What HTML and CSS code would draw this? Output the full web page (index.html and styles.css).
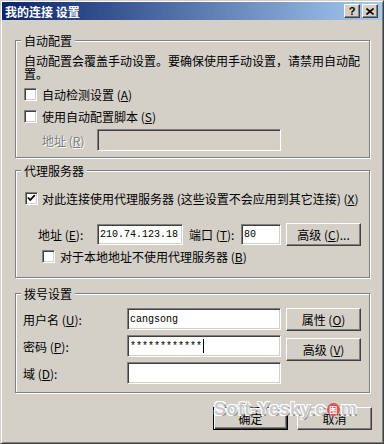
FILE: index.html
```html
<!DOCTYPE html>
<html lang="zh-CN">
<head>
<meta charset="utf-8">
<title>我的连接 设置</title>
<link rel="stylesheet" href="styles.css">
</head>
<body>
<div class="window">
  <div class="titlebar">
    <span class="title">我的连接 设置</span>
    <div class="caption-btns">
      <span class="cbtn help">?</span>
      <span class="cbtn close"><svg width="8" height="7" viewBox="0 0 8 7"><path d="M0.5 0.5 L7.5 6.5 M7.5 0.5 L0.5 6.5" stroke="#000" stroke-width="1.6" fill="none"/></svg></span>
    </div>
  </div>
  <div class="content">
    <fieldset class="group g-auto">
      <legend>自动配置</legend>
      <p class="desc">自动配置会覆盖手动设置。要确保使用手动设置，请禁用自动配置。</p>
      <label class="check c-detect"><span class="box"></span><span>自动检测设置 (<u>A</u>)</span></label>
      <label class="check c-script"><span class="box"></span><span>使用自动配置脚本 (<u>S</u>)</span></label>
      <div class="row script-addr"><span class="lbl disabled">地址 (<u>R</u>)</span><span class="field off w-script"></span></div>
    </fieldset>

    <fieldset class="group g-proxy">
      <legend>代理服务器</legend>
      <label class="check c-proxy"><span class="box"><svg width="11" height="11" viewBox="0 0 11 11"><path d="M2 4.5 L4.2 7 L8.8 2.2" stroke="#000" stroke-width="1.8" fill="none"/></svg></span><span>对此连接使用代理服务器 (这些设置不会应用到其它连接) (<u>X</u>)</span></label>
      <div class="row proxy-addr">
        <span class="lbl l-addr">地址 (<u>E</u>):</span>
        <span class="field w-ip mono">210.74.123.18</span>
        <span class="lbl l-port">端口 (<u>T</u>):</span>
        <span class="field w-port mono">80</span>
        <span class="btn b-adv">高级 (<u>C</u>)...</span>
      </div>
      <label class="check c-local"><span class="box"></span><span>对于本地地址不使用代理服务器 (<u>B</u>)</span></label>
    </fieldset>

    <fieldset class="group g-dial">
      <legend>拨号设置</legend>
      <div class="dial">
        <div class="dial-form">
          <span class="lbl">用户名 (<u>U</u>):</span><span class="field w-dial mono">cangsong</span>
          <span class="lbl">密码 (<u>P</u>):</span><span class="field w-dial mono pw">************<span class="caret"></span></span>
          <span class="lbl">域 (<u>D</u>):</span><span class="field w-dial mono"></span>
        </div>
        <div class="dial-btns">
          <span class="btn">属性 (<u>O</u>)</span>
          <span class="btn">高级 (<u>V</u>)</span>
        </div>
      </div>
    </fieldset>

    <div class="actions">
      <span class="btn default">确定</span>
      <span class="btn">取消</span>
    </div>
  </div>
  <div class="watermark">Soft-Yesky.c<span class="wm-o">图</span>m</div>
</div>
</body>
</html>
```
FILE: styles.css
```css
* { box-sizing: border-box; }
html, body { margin: 0; padding: 0; }
body {
  width: 384px;
  height: 444px;
  overflow: hidden;
  background: #D4D0C8;
  font-family: "Noto Sans CJK SC", "Liberation Sans", sans-serif;
  font-size: 12px;
  line-height: 13px;
  color: #000;
}
u { text-decoration: underline; text-underline-offset: 1px; }

.window {
  position: relative;
  width: 384px;
  height: 444px;
  background: #D4D0C8;
  padding: 1px;
  border: 1px solid;
  border-color: #D4D0C8 #404040 #404040 #D4D0C8;
  box-shadow: inset 1px 1px #fff, inset -1px -1px #808080;
}

.titlebar {
  height: 18px;
  display: flex;
  align-items: center;
  justify-content: space-between;
  padding: 0 4px 0 3px;
  background: linear-gradient(to right, #0A246A, #A6CAF0);
}
.title { color: #fff; font-weight: bold; font-size: 12px; }
.caption-btns { display: flex; gap: 2px; }
.cbtn {
  width: 16px;
  height: 14px;
  display: flex;
  align-items: center;
  justify-content: center;
  background: #D4D0C8;
  border: 1px solid;
  border-color: #fff #404040 #404040 #fff;
  box-shadow: inset -1px -1px #808080;
  font-family: "Liberation Sans", sans-serif;
  font-weight: bold;
  font-size: 11px;
  line-height: 11px;
}

.content { padding: 0 12px 0 13px; }

.group {
  margin: 0;
  min-width: 0;
  border: 1px solid #808080;
  box-shadow: inset 1px 1px #fff, 1px 1px #fff;
  padding: 0 8px;
}
.group legend {
  padding: 0 3px;
  margin-left: -3px;
  line-height: 13px;
  background: #D4D0C8;
}
.g-auto { margin-top: 14px; padding-top: 7px; padding-bottom: 6px; }
.g-proxy { margin-top: 6px; padding-top: 15px; padding-bottom: 14px; }
.g-dial { margin-top: 9px; padding-top: 8px; padding-bottom: 8px; }

.desc { margin: 0; width: 340px; }

.check { display: flex; align-items: center; height: 13px; gap: 5px; white-space: nowrap; }
.box {
  width: 13px;
  height: 13px;
  flex: none;
  background: #fff;
  border: 1px solid;
  border-color: #808080 #fff #fff #808080;
  box-shadow: inset 1px 1px #404040, inset -1px -1px #D4D0C8;
  display: flex;
  align-items: center;
  justify-content: center;
}
.c-detect { margin-top: 8px; }
.c-script { margin-top: 9px; }
.c-proxy { margin-left: 1px; gap: 4px; }
.c-local { margin-top: 4px; margin-left: 18px; }

.row { display: flex; align-items: center; white-space: nowrap; }
.script-addr { margin-top: 6px; padding-left: 18px; }
.script-addr .lbl { width: 55px; }
.disabled { color: #808080; text-shadow: 1px 1px 0 #fff; }

.field {
  height: 22px;
  flex: none;
  background: #fff;
  border: 1px solid;
  border-color: #808080 #fff #fff #808080;
  box-shadow: inset 1px 1px #404040, inset -1px -1px #D4D0C8;
  display: flex;
  align-items: center;
  padding: 0 2px;
  overflow: hidden;
}
.field.off { background: #D4D0C8; }
.mono { font-family: "Liberation Mono", monospace; font-size: 10px; }
.w-script { width: 184px; }

.proxy-addr { margin-top: 18px; padding-left: 14px; height: 23px; }
.l-addr { width: 59px; }
.w-ip { width: 86px; height: 21px; }
.l-port { width: 52px; margin-left: 6px; }
.w-port { width: 40px; height: 21px; }
.b-adv { margin-left: 5px; }

.btn {
  width: 75px;
  height: 23px;
  flex: none;
  display: flex;
  align-items: center;
  justify-content: center;
  background: #D4D0C8;
  border: 1px solid;
  border-color: #fff #404040 #404040 #fff;
  box-shadow: inset -1px -1px #808080;
  white-space: nowrap;
}
.btn.default {
  border: 1px solid #000;
  box-shadow: inset 1px 1px #fff, inset -1px -1px #404040, inset -2px -2px #808080;
}

.dial { display: flex; align-items: flex-start; margin-left: -1px; }
.dial-form {
  display: grid;
  grid-template-columns: 104px 154px;
  row-gap: 5px;
  align-items: center;
}
.w-dial { width: 154px; }
.pw { letter-spacing: 0; }
.caret { display: inline-block; width: 1px; height: 14px; background: #000; margin-left: 1px; }
.dial-btns { display: flex; flex-direction: column; gap: 7px; margin-left: 5px; }

.actions {
  display: flex;
  justify-content: flex-end;
  gap: 9px;
  margin-top: 14px;
  margin-right: -2px;
}

.watermark {
  position: absolute;
  left: 213px;
  top: 398px;
  font-family: "Liberation Sans", sans-serif;
  font-weight: bold;
  font-size: 18px;
  line-height: 20px;
  letter-spacing: 0.5px;
  color: rgba(196, 196, 196, 0.9);
  text-shadow: -1px -1px 0 #fff, 1px -1px 0 #fff, -1px 1px 0 #fff, 1px 1px 0 #8a8a8a;
  display: flex;
  align-items: center;
  pointer-events: none;
}
.wm-o {
  width: 13px;
  height: 13px;
  border-radius: 50%;
  background: #e05050;
  color: #fff;
  font-family: "Noto Sans CJK SC", sans-serif;
  font-size: 8px;
  line-height: 13px;
  text-align: center;
  text-shadow: none;
  letter-spacing: 0;
  margin: 0 1px;
}
```
